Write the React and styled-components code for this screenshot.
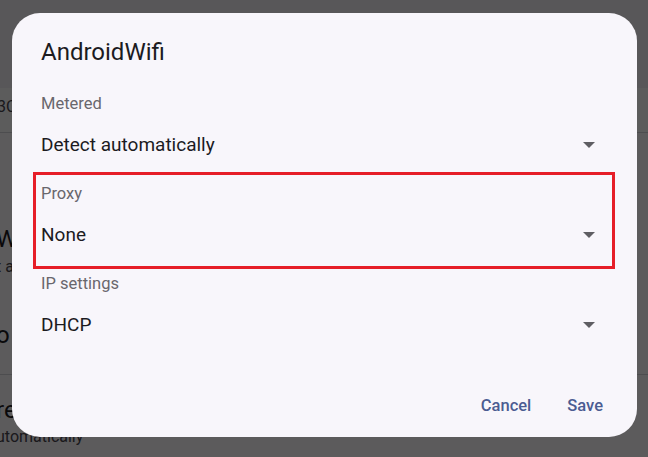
import React from 'react'

import styled, { createGlobalStyle } from 'styled-components'

const GlobalStyle = createGlobalStyle`
  html, body {
    margin: 0;
    padding: 0;
    width: 648px;
    height: 457px;
    overflow: hidden;
    font-family: Roboto, "Liberation Sans", sans-serif;
  }
`

const Arrow = () =>
  <StyledArrow viewBox="0 0 12 6">
    <path d="M0 0h12L6 6z" fill="currentColor" />
  </StyledArrow>

const Field = ({ label, value, highlight }) =>
  <StyledField highlight={highlight}>
    <StyledLabel>{label}</StyledLabel>
    <StyledValueRow>
      <StyledValue>{value}</StyledValue>
      <Arrow />
    </StyledValueRow>
  </StyledField>

export default () =>
  <StyledScreen>
    <GlobalStyle />
    <StyledPage>
      <StyledAppBar />
      <StyledBand>
        <StyledSmallBg>3C network</StyledSmallBg>
      </StyledBand>
      <StyledBgItem top={92}>
        <StyledBigBg>Wi-Fi</StyledBigBg>
        <StyledSubBg shift={4}>t automatically</StyledSubBg>
      </StyledBgItem>
      <StyledBgItem top={44} bottom={25} divider>
        <StyledBigBg>o</StyledBigBg>
      </StyledBgItem>
      <StyledBgItem top={21}>
        <StyledBigBg>re</StyledBigBg>
        <StyledSubBg shift={3}>utomatically</StyledSubBg>
      </StyledBgItem>
    </StyledPage>
    <StyledScrim />
    <StyledDialog>
      <StyledTitle>AndroidWifi</StyledTitle>
      <Field label="Metered" value="Detect automatically" />
      <Field label="Proxy" value="None" highlight />
      <Field label="IP settings" value="DHCP" />
      <StyledActions>
        <StyledButton>Cancel</StyledButton>
        <StyledButton>Save</StyledButton>
      </StyledActions>
    </StyledDialog>
  </StyledScreen>

const StyledScreen = styled.div`
  position: relative;
  width: 648px;
  height: 457px;
  overflow: hidden;
`

const StyledPage = styled.div`
  background: #fefcff;
  height: 100%;
  display: flex;
  flex-direction: column;
  color: #1c1b1f;
`

const StyledAppBar = styled.div`
  height: 88px;
  background: #f4f2f7;
  flex-shrink: 0;
`

const StyledBand = styled.div`
  height: 45px;
  box-sizing: border-box;
  border-bottom: 1px solid #d6d4da;
  background: #ffffff;
  display: flex;
  align-items: center;
  padding-bottom: 8px;
  flex-shrink: 0;
`

const StyledBgItem = styled.div`
  display: flex;
  flex-direction: column;
  padding-top: ${({ top }) => top}px;
  padding-bottom: ${({ bottom = 0 }) => bottom}px;
  border-bottom: ${({ divider }) => divider ? '1px solid #d6d4da' : 'none'};
  flex-shrink: 0;
`

const StyledSmallBg = styled.span`
  font-size: 16px;
  margin-left: -3px;
  color: #49454f;
  white-space: nowrap;
`

const StyledBigBg = styled.span`
  font-size: 24px;
  line-height: 28px;
  margin-left: -4px;
  white-space: nowrap;
`

const StyledSubBg = styled.span`
  font-size: 16px;
  line-height: 20px;
  margin-top: ${({ shift = 0 }) => shift}px;
  margin-left: -4px;
  color: #49454f;
  white-space: nowrap;
`

const StyledScrim = styled.div`
  position: absolute;
  inset: 0;
  background: rgba(0, 0, 0, 0.64);
`

const StyledDialog = styled.div`
  position: absolute;
  left: 12px;
  top: 13px;
  width: 625px;
  height: 424px;
  box-sizing: border-box;
  background: #f8f6fb;
  border-radius: 28px;
  padding-top: 24px;
  display: flex;
  flex-direction: column;
`

const StyledTitle = styled.h1`
  margin: 0 0 17px 29px;
  font-size: 24px;
  font-weight: 400;
  line-height: 30px;
  color: #1c1b1f;
`

const StyledField = styled.div`
  position: relative;
  margin: 0 22px 0 21px;
  padding: 10px 20px 17px 8px;
  &::after {
    content: '';
    display: ${({ highlight }) => highlight ? 'block' : 'none'};
    position: absolute;
    left: 0;
    right: 0;
    top: -2px;
    bottom: -5px;
    border: 3px solid #e61e28;
  }
`

const StyledLabel = styled.div`
  font-size: 16.5px;
  line-height: 20px;
  color: #69676d;
`

const StyledValueRow = styled.div`
  margin-top: 19px;
  height: 24px;
  display: flex;
  align-items: center;
  justify-content: space-between;
`

const StyledValue = styled.span`
  font-size: 19px;
  line-height: 24px;
  color: #1c1b1f;
`

const StyledArrow = styled.svg`
  width: 12px;
  height: 6px;
  color: #5f5e63;
`

const StyledActions = styled.div`
  margin-top: auto;
  padding: 0 22px 12px 0;
  display: flex;
  justify-content: flex-end;
  gap: 12px;
`

const StyledButton = styled.button`
  height: 40px;
  padding: 0 12px;
  border: none;
  background: transparent;
  font-family: Roboto, "Liberation Sans", sans-serif;
  font-size: 16.5px;
  font-weight: 500;
  color: #4b5c92;
`
